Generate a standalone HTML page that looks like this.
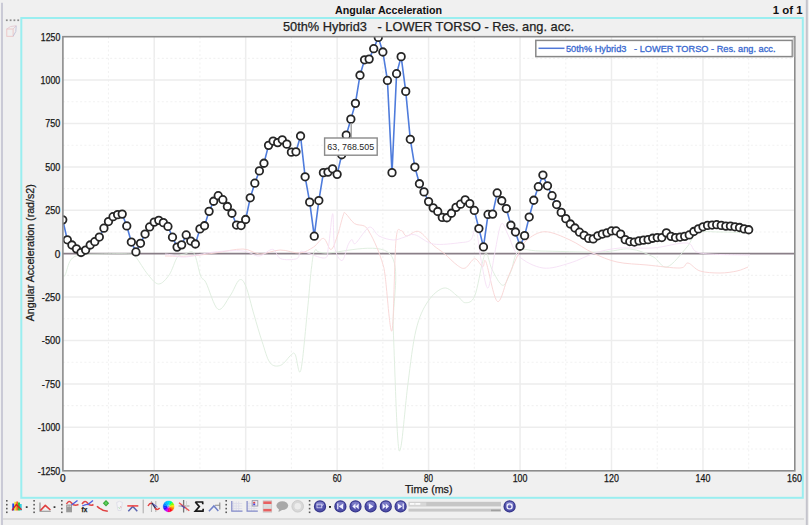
<!DOCTYPE html>
<html><head><meta charset="utf-8">
<style>
html,body{margin:0;padding:0;background:#f0f0f0;}
body{width:809px;height:525px;overflow:hidden;position:relative;font-family:"Liberation Sans",sans-serif;}
svg{position:absolute;left:0;top:0;}
.gm{stroke:#ededed;stroke-width:1.5;}
.gn{stroke:#f2f2f2;stroke-width:1.1;stroke-dasharray:2 2.3;}
.lab{font-family:"Liberation Sans",sans-serif;font-size:10.2px;fill:#161616;stroke:#161616;stroke-width:0.25;}
</style></head><body>
<svg width="809" height="525" viewBox="0 0 809 525">
 <rect x="0" y="0" width="809" height="525" fill="#f0f0f0"/>
 <!-- window lines -->
 <line x1="2" y1="2.7" x2="2" y2="525" stroke="#cacad6" stroke-width="2"/>
 <line x1="806.8" y1="0" x2="806.8" y2="525" stroke="#c4c4cc" stroke-width="2"/>
 <line x1="3" y1="519" x2="804" y2="519" stroke="#d6d6d6" stroke-width="1.7"/>
 <!-- cyan frame -->
 <rect x="21.3" y="18" width="781.5" height="479.8" fill="none" stroke="#9aeef0" stroke-width="2"/>
 <!-- title -->
 <text x="388.5" y="14" text-anchor="middle" font-family="Liberation Sans" font-weight="bold" font-size="11.2px" fill="#111" textLength="107" lengthAdjust="spacingAndGlyphs">Angular Acceleration</text>
 <text x="802.5" y="14.2" text-anchor="end" font-family="Liberation Sans" font-weight="bold" font-size="11.4px" fill="#111">1 of 1</text>
 <text x="428.5" y="30.6" text-anchor="middle" font-family="Liberation Sans" font-size="12.8px" fill="#222" stroke="#222" stroke-width="0.25">50th% Hybrid3 &#160; - LOWER TORSO - Res. ang. acc.</text>
 <!-- dots left -->
 <g fill="#8c8c8c"><rect x="5.9" y="19.4" width="1.8" height="1.7"/><rect x="9.7" y="19.4" width="1.8" height="1.7"/><rect x="13.5" y="19.4" width="1.8" height="1.7"/><rect x="17.3" y="19.4" width="1.8" height="1.7"/></g>
 <g fill="none" stroke-width="0.9"><rect x="6.8" y="29" width="6.3" height="7.3" stroke="#ecc4c4"/><path d="M6.8 29 L10.5 26.5 L16.2 25.8 L13.1 29" stroke="#e4c8d0"/><path d="M16.2 25.8 L15.8 31.5 L13.1 36.3" stroke="#c0c0d8"/></g>
 <!-- plot -->
 <rect x="62.9" y="36.7" width="731.90" height="434.10" fill="#ffffff"/>
 <g><line x1="108.48" y1="36.7" x2="108.48" y2="470.8" class="gn"/><line x1="154.21" y1="36.7" x2="154.21" y2="470.8" class="gm"/><line x1="199.94" y1="36.7" x2="199.94" y2="470.8" class="gn"/><line x1="245.67" y1="36.7" x2="245.67" y2="470.8" class="gm"/><line x1="291.40" y1="36.7" x2="291.40" y2="470.8" class="gn"/><line x1="337.13" y1="36.7" x2="337.13" y2="470.8" class="gm"/><line x1="382.86" y1="36.7" x2="382.86" y2="470.8" class="gn"/><line x1="428.59" y1="36.7" x2="428.59" y2="470.8" class="gm"/><line x1="474.32" y1="36.7" x2="474.32" y2="470.8" class="gn"/><line x1="520.05" y1="36.7" x2="520.05" y2="470.8" class="gm"/><line x1="565.78" y1="36.7" x2="565.78" y2="470.8" class="gn"/><line x1="611.51" y1="36.7" x2="611.51" y2="470.8" class="gm"/><line x1="657.24" y1="36.7" x2="657.24" y2="470.8" class="gn"/><line x1="702.97" y1="36.7" x2="702.97" y2="470.8" class="gm"/><line x1="748.70" y1="36.7" x2="748.70" y2="470.8" class="gn"/><line x1="62.9" y1="449.00" x2="794.8" y2="449.00" class="gn"/><line x1="62.9" y1="427.30" x2="794.8" y2="427.30" class="gm"/><line x1="62.9" y1="405.60" x2="794.8" y2="405.60" class="gn"/><line x1="62.9" y1="383.90" x2="794.8" y2="383.90" class="gm"/><line x1="62.9" y1="362.20" x2="794.8" y2="362.20" class="gn"/><line x1="62.9" y1="340.50" x2="794.8" y2="340.50" class="gm"/><line x1="62.9" y1="318.80" x2="794.8" y2="318.80" class="gn"/><line x1="62.9" y1="297.10" x2="794.8" y2="297.10" class="gm"/><line x1="62.9" y1="275.40" x2="794.8" y2="275.40" class="gn"/><line x1="62.9" y1="232.00" x2="794.8" y2="232.00" class="gn"/><line x1="62.9" y1="210.30" x2="794.8" y2="210.30" class="gm"/><line x1="62.9" y1="188.60" x2="794.8" y2="188.60" class="gn"/><line x1="62.9" y1="166.90" x2="794.8" y2="166.90" class="gm"/><line x1="62.9" y1="145.20" x2="794.8" y2="145.20" class="gn"/><line x1="62.9" y1="123.50" x2="794.8" y2="123.50" class="gm"/><line x1="62.9" y1="101.80" x2="794.8" y2="101.80" class="gn"/><line x1="62.9" y1="80.10" x2="794.8" y2="80.10" class="gm"/><line x1="62.9" y1="58.40" x2="794.8" y2="58.40" class="gn"/></g>
 <line x1="62.9" y1="253.7" x2="794.8" y2="253.7" stroke="#8a7f88" stroke-width="1.8"/>
 <g fill="none" stroke-width="0.9" stroke-linejoin="round">
  <path d="M63.5,276.0 C63.8,275.8 64.1,277.4 65.3,274.7 C66.5,272.0 68.2,263.3 70.7,260.0 C73.2,256.7 75.1,256.0 80.0,255.0 C84.9,254.0 91.7,254.2 100.0,254.0 C108.3,253.8 124.0,253.4 130.0,254.0 C136.0,254.6 133.0,253.9 136.0,257.3 C139.0,260.8 144.2,270.2 148.0,274.7 C151.8,279.1 155.1,284.0 158.7,284.0 C162.2,284.0 166.2,279.1 169.3,274.7 C172.4,270.2 174.7,260.8 177.3,257.3 C179.9,253.9 182.2,254.7 185.0,254.0 C187.8,253.3 191.4,249.6 194.0,253.3 C196.6,257.0 198.7,271.1 200.7,276.0 C202.7,280.9 203.1,277.1 206.0,282.7 C208.9,288.2 214.0,307.1 218.0,309.3 C222.0,311.5 226.4,300.9 230.0,296.0 C233.6,291.1 236.6,281.6 239.3,280.0 C242.0,278.4 243.6,280.9 246.0,286.7 C248.4,292.5 251.3,305.6 254.0,314.7 C256.7,323.8 259.3,333.3 262.0,341.3 C264.7,349.3 266.9,358.7 270.0,362.7 C273.1,366.7 277.1,366.6 280.7,365.3 C284.2,364.0 288.9,356.5 291.3,354.7 C293.7,352.9 293.7,352.0 295.3,354.7 C296.9,357.4 298.7,377.8 300.7,370.7 C302.7,363.6 305.5,328.9 307.3,312.0 C309.1,295.1 310.0,279.6 311.3,269.3 C312.6,259.0 313.0,252.7 315.3,250.0 C317.6,247.3 312.6,252.3 325.0,253.0 C337.4,253.7 378.6,241.2 390.0,254.0 C401.4,266.8 392.1,300.4 393.3,330.0 C394.5,359.6 396.1,411.8 397.3,431.3 C398.6,450.9 399.0,455.3 400.8,447.3 C402.6,439.3 405.5,402.9 408.0,383.3 C410.5,363.8 412.7,343.7 416.0,330.0 C419.3,316.3 423.3,308.3 428.0,301.3 C432.7,294.3 439.1,288.9 444.0,288.0 C448.9,287.1 453.8,293.6 457.3,296.0 C460.9,298.4 462.4,302.7 465.3,302.7 C468.2,302.7 471.8,302.9 474.7,296.0 C477.6,289.1 480.7,268.4 482.7,261.3 C484.7,254.2 485.1,252.0 486.7,253.3 C488.2,254.6 489.3,264.0 492.0,269.3 C494.7,274.6 499.6,284.9 502.7,285.3 C505.8,285.8 508.0,277.8 510.7,272.0 C513.4,266.2 513.8,254.2 518.7,250.7 C523.6,247.2 526.5,250.8 540.0,251.0 C553.5,251.2 585.0,252.3 600.0,252.0 C615.0,251.7 621.2,248.2 630.0,249.0 C638.8,249.8 646.8,253.7 653.0,256.7 C659.2,259.7 661.3,268.6 667.0,267.0 C672.7,265.4 682.0,252.7 687.0,247.0 C692.0,241.3 691.5,235.5 697.0,233.0 C702.5,230.5 711.2,232.0 720.0,232.0 C728.8,232.0 745.0,232.8 750.0,233.0" stroke="#dcecdc"/>
  <path d="M165.0,256.0 C169.2,256.0 181.7,256.5 190.0,256.0 C198.3,255.5 206.2,254.2 215.0,253.0 C223.8,251.8 235.5,248.8 243.0,249.0 C250.5,249.2 253.8,253.8 260.0,254.0 C266.2,254.2 273.3,250.2 280.0,250.0 C286.7,249.8 294.4,253.5 300.0,253.0 C305.6,252.5 309.7,249.4 313.6,247.0 C317.5,244.6 320.6,238.0 323.5,238.4 C326.4,238.8 328.6,249.7 330.9,249.5 C333.1,249.3 334.9,242.8 337.0,237.0 C339.1,231.2 341.9,218.8 343.3,214.9 C344.8,211.0 343.9,212.2 345.7,213.6 C347.5,215.0 351.3,221.4 354.4,223.5 C357.5,225.6 361.8,224.6 364.3,226.0 C366.8,227.4 367.2,228.5 369.3,232.0 C371.4,235.5 374.4,241.6 376.7,247.0 C379.0,252.4 381.5,259.3 382.9,264.4 C384.3,269.4 383.8,266.2 385.3,277.3 C386.8,288.4 390.2,336.9 392.0,330.7 C393.8,324.5 394.4,256.7 396.0,240.0 C397.6,223.3 399.5,231.4 401.3,230.7 C403.1,230.0 403.8,235.9 406.7,236.0 C409.6,236.1 414.3,229.9 418.7,231.5 C423.1,233.1 429.1,241.7 433.3,245.3 C437.5,248.9 440.0,250.0 444.0,253.3 C448.0,256.6 453.8,262.9 457.3,265.3 C460.9,267.8 462.4,269.1 465.3,268.0 C468.2,266.9 471.8,258.9 474.7,258.7 C477.6,258.5 480.8,266.1 482.7,266.7 C484.6,267.2 483.6,256.2 486.0,262.0 C488.4,267.8 493.6,298.8 497.3,301.3 C501.0,303.9 504.4,285.3 508.0,277.3 C511.6,269.3 515.5,259.5 518.7,253.3 C521.9,247.1 522.6,243.6 527.0,240.0 C531.4,236.4 537.8,231.7 545.0,231.7 C552.2,231.7 562.0,236.4 570.0,240.0 C578.0,243.6 585.2,249.3 593.0,253.0 C600.8,256.7 608.0,260.0 617.0,262.0 C626.0,264.0 636.5,264.0 647.0,265.0 C657.5,266.0 673.2,268.3 680.0,268.0 C686.8,267.7 684.7,262.5 688.0,263.0 C691.3,263.5 694.7,269.3 700.0,271.0 C705.3,272.7 713.8,273.0 720.0,273.0 C726.2,273.0 732.3,272.0 737.0,271.0 C741.7,270.0 746.2,267.7 748.0,267.0" stroke="#f8d4d4"/>
  <path d="M165.0,254.0 C165.9,254.1 167.4,254.2 170.7,254.7 C174.0,255.2 177.8,257.4 185.0,257.0 C192.2,256.6 204.3,253.0 214.0,252.0 C223.7,251.0 235.5,250.3 243.0,251.0 C250.5,251.7 254.1,256.3 259.0,256.0 C263.9,255.7 269.1,248.9 272.7,249.3 C276.3,249.8 276.7,257.1 280.7,258.7 C284.7,260.3 293.5,259.8 296.7,258.7 C299.9,257.6 298.7,253.1 300.0,252.0 C301.3,250.9 300.6,251.0 304.7,252.0 C308.8,253.0 320.8,258.8 324.7,258.0 C328.6,257.2 327.1,254.4 328.4,247.0 C329.7,239.6 331.7,213.6 332.7,213.6 C333.7,213.6 333.1,239.2 334.6,247.0 C336.2,254.8 339.7,261.0 342.0,260.6 C344.3,260.2 346.5,248.1 348.2,244.6 C349.9,241.1 350.8,239.8 352.0,239.6 C353.2,239.4 352.7,245.4 355.6,243.3 C358.5,241.2 365.4,228.4 369.3,227.2 C373.2,226.0 375.0,233.9 379.0,236.0 C383.0,238.1 389.1,239.8 393.3,240.0 C397.5,240.2 400.4,238.2 404.0,237.3 C407.6,236.4 409.8,233.6 414.7,234.7 C419.6,235.8 425.8,242.7 433.3,244.0 C440.9,245.3 453.8,243.4 460.0,242.7 C466.2,242.0 468.0,242.2 470.7,240.0 C473.4,237.8 474.2,225.8 476.0,229.3 C477.8,232.9 479.3,251.5 481.3,261.3 C483.3,271.1 485.8,289.3 488.0,288.0 C490.2,286.7 492.5,264.0 494.7,253.3 C496.9,242.6 499.1,227.1 501.3,224.0 C503.5,220.9 505.1,229.4 508.0,234.7 C510.9,240.0 512.9,250.4 518.7,256.0 C524.5,261.6 534.5,266.8 543.0,268.0 C551.5,269.2 561.3,265.5 570.0,263.0 C578.7,260.5 586.7,255.5 595.0,253.0 C603.3,250.5 610.3,248.8 620.0,248.0 C629.7,247.2 641.8,248.8 653.0,248.0 C664.2,247.2 679.2,242.2 687.0,243.0 C694.8,243.8 689.5,251.0 700.0,253.0 C710.5,255.0 741.7,254.7 750.0,255.0" stroke="#f5e0f5"/>
 </g>
 <clipPath id="pc"><rect x="62.9" y="36.7" width="731.90" height="434.10"/></clipPath>
 <g clip-path="url(#pc)">
  <polyline points="62.75,219.85 67.32,239.81 71.90,245.02 76.47,248.84 81.04,252.48 85.62,250.05 90.19,245.02 94.76,241.72 99.33,237.03 103.91,228.18 108.48,221.58 113.05,216.72 117.63,214.64 122.20,214.12 126.77,225.92 131.34,242.07 135.92,251.96 140.49,243.28 145.06,234.08 149.64,226.97 154.21,222.10 158.78,220.37 163.36,222.63 167.93,226.44 172.50,237.21 177.08,247.10 181.65,244.85 186.22,234.95 190.79,241.03 195.37,243.98 199.94,228.88 204.51,225.75 209.09,211.34 213.66,201.27 218.23,195.72 222.81,199.71 227.38,206.48 231.95,213.25 236.52,225.06 241.10,225.58 245.67,219.50 250.24,197.80 254.82,183.22 259.39,170.89 263.96,163.25 268.54,145.37 273.11,141.03 277.68,142.60 282.25,139.82 286.83,144.16 291.40,152.14 295.97,151.80 300.55,136.00 305.12,176.80 309.69,202.14 314.26,236.17 318.84,200.58 323.41,172.63 327.98,172.11 332.56,168.81 337.13,174.36 341.70,154.75 346.28,135.13 350.85,119.16 355.42,103.36 360.00,75.24 364.57,59.79 369.14,59.09 373.71,48.68 378.29,37.39 382.86,51.98 387.43,80.45 392.01,172.63 396.58,73.68 401.15,56.66 405.73,91.38 410.30,139.30 414.87,167.07 419.44,183.74 424.02,191.90 428.59,201.62 433.16,207.87 437.74,211.52 442.31,217.42 446.88,217.76 451.46,213.25 456.03,207.35 460.60,204.22 465.17,199.88 469.75,203.53 474.32,210.47 478.89,228.53 483.47,246.93 488.04,214.47 492.61,214.12 497.19,192.94 501.76,200.75 506.33,208.56 510.90,225.23 515.48,232.00 520.05,246.24 524.62,235.65 529.20,217.07 533.77,200.23 538.34,186.69 542.91,175.06 547.49,185.82 552.06,195.72 556.63,204.57 561.21,212.38 565.78,218.63 570.35,224.01 574.93,228.01 579.50,232.17 584.07,235.30 588.65,238.42 593.22,238.94 597.79,235.82 602.36,234.08 606.94,232.87 611.51,230.96 616.08,230.96 620.66,234.08 625.23,239.64 629.80,241.55 634.38,242.07 638.95,240.85 643.52,240.16 648.09,239.64 652.67,238.25 657.24,237.56 661.81,237.56 666.39,232.87 670.96,236.34 675.53,237.56 680.11,237.03 684.68,236.34 689.25,234.95 693.82,231.48 698.40,228.88 702.97,226.79 707.54,225.40 712.12,225.06 716.69,224.71 721.26,225.40 725.84,226.10 730.41,226.10 734.98,226.79 739.55,227.49 744.13,228.88 748.70,229.74" fill="none" stroke="#4f7cdc" stroke-width="1.6" stroke-linejoin="round"/>
  <g fill="#ffffff" stroke="#262626" stroke-width="1.8"><circle cx="62.75" cy="219.85" r="3.75"/><circle cx="67.32" cy="239.81" r="3.75"/><circle cx="71.90" cy="245.02" r="3.75"/><circle cx="76.47" cy="248.84" r="3.75"/><circle cx="81.04" cy="252.48" r="3.75"/><circle cx="85.62" cy="250.05" r="3.75"/><circle cx="90.19" cy="245.02" r="3.75"/><circle cx="94.76" cy="241.72" r="3.75"/><circle cx="99.33" cy="237.03" r="3.75"/><circle cx="103.91" cy="228.18" r="3.75"/><circle cx="108.48" cy="221.58" r="3.75"/><circle cx="113.05" cy="216.72" r="3.75"/><circle cx="117.63" cy="214.64" r="3.75"/><circle cx="122.20" cy="214.12" r="3.75"/><circle cx="126.77" cy="225.92" r="3.75"/><circle cx="131.34" cy="242.07" r="3.75"/><circle cx="135.92" cy="251.96" r="3.75"/><circle cx="140.49" cy="243.28" r="3.75"/><circle cx="145.06" cy="234.08" r="3.75"/><circle cx="149.64" cy="226.97" r="3.75"/><circle cx="154.21" cy="222.10" r="3.75"/><circle cx="158.78" cy="220.37" r="3.75"/><circle cx="163.36" cy="222.63" r="3.75"/><circle cx="167.93" cy="226.44" r="3.75"/><circle cx="172.50" cy="237.21" r="3.75"/><circle cx="177.08" cy="247.10" r="3.75"/><circle cx="181.65" cy="244.85" r="3.75"/><circle cx="186.22" cy="234.95" r="3.75"/><circle cx="190.79" cy="241.03" r="3.75"/><circle cx="195.37" cy="243.98" r="3.75"/><circle cx="199.94" cy="228.88" r="3.75"/><circle cx="204.51" cy="225.75" r="3.75"/><circle cx="209.09" cy="211.34" r="3.75"/><circle cx="213.66" cy="201.27" r="3.75"/><circle cx="218.23" cy="195.72" r="3.75"/><circle cx="222.81" cy="199.71" r="3.75"/><circle cx="227.38" cy="206.48" r="3.75"/><circle cx="231.95" cy="213.25" r="3.75"/><circle cx="236.52" cy="225.06" r="3.75"/><circle cx="241.10" cy="225.58" r="3.75"/><circle cx="245.67" cy="219.50" r="3.75"/><circle cx="250.24" cy="197.80" r="3.75"/><circle cx="254.82" cy="183.22" r="3.75"/><circle cx="259.39" cy="170.89" r="3.75"/><circle cx="263.96" cy="163.25" r="3.75"/><circle cx="268.54" cy="145.37" r="3.75"/><circle cx="273.11" cy="141.03" r="3.75"/><circle cx="277.68" cy="142.60" r="3.75"/><circle cx="282.25" cy="139.82" r="3.75"/><circle cx="286.83" cy="144.16" r="3.75"/><circle cx="291.40" cy="152.14" r="3.75"/><circle cx="295.97" cy="151.80" r="3.75"/><circle cx="300.55" cy="136.00" r="3.75"/><circle cx="305.12" cy="176.80" r="3.75"/><circle cx="309.69" cy="202.14" r="3.75"/><circle cx="314.26" cy="236.17" r="3.75"/><circle cx="318.84" cy="200.58" r="3.75"/><circle cx="323.41" cy="172.63" r="3.75"/><circle cx="327.98" cy="172.11" r="3.75"/><circle cx="332.56" cy="168.81" r="3.75"/><circle cx="337.13" cy="174.36" r="3.75"/><circle cx="341.70" cy="154.75" r="3.75"/><circle cx="346.28" cy="135.13" r="3.75"/><circle cx="350.85" cy="119.16" r="3.75"/><circle cx="355.42" cy="103.36" r="3.75"/><circle cx="360.00" cy="75.24" r="3.75"/><circle cx="364.57" cy="59.79" r="3.75"/><circle cx="369.14" cy="59.09" r="3.75"/><circle cx="373.71" cy="48.68" r="3.75"/><circle cx="378.29" cy="37.39" r="3.75"/><circle cx="382.86" cy="51.98" r="3.75"/><circle cx="387.43" cy="80.45" r="3.75"/><circle cx="392.01" cy="172.63" r="3.75"/><circle cx="396.58" cy="73.68" r="3.75"/><circle cx="401.15" cy="56.66" r="3.75"/><circle cx="405.73" cy="91.38" r="3.75"/><circle cx="410.30" cy="139.30" r="3.75"/><circle cx="414.87" cy="167.07" r="3.75"/><circle cx="419.44" cy="183.74" r="3.75"/><circle cx="424.02" cy="191.90" r="3.75"/><circle cx="428.59" cy="201.62" r="3.75"/><circle cx="433.16" cy="207.87" r="3.75"/><circle cx="437.74" cy="211.52" r="3.75"/><circle cx="442.31" cy="217.42" r="3.75"/><circle cx="446.88" cy="217.76" r="3.75"/><circle cx="451.46" cy="213.25" r="3.75"/><circle cx="456.03" cy="207.35" r="3.75"/><circle cx="460.60" cy="204.22" r="3.75"/><circle cx="465.17" cy="199.88" r="3.75"/><circle cx="469.75" cy="203.53" r="3.75"/><circle cx="474.32" cy="210.47" r="3.75"/><circle cx="478.89" cy="228.53" r="3.75"/><circle cx="483.47" cy="246.93" r="3.75"/><circle cx="488.04" cy="214.47" r="3.75"/><circle cx="492.61" cy="214.12" r="3.75"/><circle cx="497.19" cy="192.94" r="3.75"/><circle cx="501.76" cy="200.75" r="3.75"/><circle cx="506.33" cy="208.56" r="3.75"/><circle cx="510.90" cy="225.23" r="3.75"/><circle cx="515.48" cy="232.00" r="3.75"/><circle cx="520.05" cy="246.24" r="3.75"/><circle cx="524.62" cy="235.65" r="3.75"/><circle cx="529.20" cy="217.07" r="3.75"/><circle cx="533.77" cy="200.23" r="3.75"/><circle cx="538.34" cy="186.69" r="3.75"/><circle cx="542.91" cy="175.06" r="3.75"/><circle cx="547.49" cy="185.82" r="3.75"/><circle cx="552.06" cy="195.72" r="3.75"/><circle cx="556.63" cy="204.57" r="3.75"/><circle cx="561.21" cy="212.38" r="3.75"/><circle cx="565.78" cy="218.63" r="3.75"/><circle cx="570.35" cy="224.01" r="3.75"/><circle cx="574.93" cy="228.01" r="3.75"/><circle cx="579.50" cy="232.17" r="3.75"/><circle cx="584.07" cy="235.30" r="3.75"/><circle cx="588.65" cy="238.42" r="3.75"/><circle cx="593.22" cy="238.94" r="3.75"/><circle cx="597.79" cy="235.82" r="3.75"/><circle cx="602.36" cy="234.08" r="3.75"/><circle cx="606.94" cy="232.87" r="3.75"/><circle cx="611.51" cy="230.96" r="3.75"/><circle cx="616.08" cy="230.96" r="3.75"/><circle cx="620.66" cy="234.08" r="3.75"/><circle cx="625.23" cy="239.64" r="3.75"/><circle cx="629.80" cy="241.55" r="3.75"/><circle cx="634.38" cy="242.07" r="3.75"/><circle cx="638.95" cy="240.85" r="3.75"/><circle cx="643.52" cy="240.16" r="3.75"/><circle cx="648.09" cy="239.64" r="3.75"/><circle cx="652.67" cy="238.25" r="3.75"/><circle cx="657.24" cy="237.56" r="3.75"/><circle cx="661.81" cy="237.56" r="3.75"/><circle cx="666.39" cy="232.87" r="3.75"/><circle cx="670.96" cy="236.34" r="3.75"/><circle cx="675.53" cy="237.56" r="3.75"/><circle cx="680.11" cy="237.03" r="3.75"/><circle cx="684.68" cy="236.34" r="3.75"/><circle cx="689.25" cy="234.95" r="3.75"/><circle cx="693.82" cy="231.48" r="3.75"/><circle cx="698.40" cy="228.88" r="3.75"/><circle cx="702.97" cy="226.79" r="3.75"/><circle cx="707.54" cy="225.40" r="3.75"/><circle cx="712.12" cy="225.06" r="3.75"/><circle cx="716.69" cy="224.71" r="3.75"/><circle cx="721.26" cy="225.40" r="3.75"/><circle cx="725.84" cy="226.10" r="3.75"/><circle cx="730.41" cy="226.10" r="3.75"/><circle cx="734.98" cy="226.79" r="3.75"/><circle cx="739.55" cy="227.49" r="3.75"/><circle cx="744.13" cy="228.88" r="3.75"/><circle cx="748.70" cy="229.74" r="3.75"/></g>
 </g>
 <rect x="62.9" y="36.7" width="731.90" height="434.10" fill="none" stroke="#8c8c8c" stroke-width="1.6"/>
 <!-- legend -->
 <rect x="535.8" y="40.4" width="256.5" height="16.2" fill="#ffffff" stroke="#888888" stroke-width="1.5"/>
 <line x1="793.5" y1="38" x2="793.5" y2="57" stroke="#d0d0d0" stroke-width="1.5"/>
 <line x1="538.5" y1="48.3" x2="564.5" y2="48.3" stroke="#5078d8" stroke-width="1.5"/>
 <text x="566" y="51.6" font-family="Liberation Sans" font-size="8.6px" fill="#3a6ad0" stroke="#3a6ad0" stroke-width="0.3" textLength="209.5" lengthAdjust="spacingAndGlyphs">50th% Hybrid3 &#160; - LOWER TORSO - Res. ang. acc.</text>
 <!-- tooltip -->
 <line x1="351.2" y1="123" x2="351.2" y2="138" stroke="#999" stroke-width="1.3"/>
 <rect x="324.6" y="138" width="52.6" height="17.2" fill="#ffffff" stroke="#8a8a8a" stroke-width="1.4"/>
 <text x="350.7" y="150.4" text-anchor="middle" font-family="Liberation Sans" font-size="9.8px" fill="#1e1e1e" textLength="46.8" lengthAdjust="spacingAndGlyphs">63, 768.505</text>
 <!-- axis labels -->
 <g class="lab"><text x="60.3" y="40.60" text-anchor="end" textLength="19.5" lengthAdjust="spacingAndGlyphs">1250</text><text x="60.3" y="84.00" text-anchor="end" textLength="19.7" lengthAdjust="spacingAndGlyphs">1000</text><text x="60.3" y="127.40" text-anchor="end" textLength="15.0" lengthAdjust="spacingAndGlyphs">750</text><text x="60.3" y="170.80" text-anchor="end" textLength="15.0" lengthAdjust="spacingAndGlyphs">500</text><text x="60.3" y="214.20" text-anchor="end" textLength="15.0" lengthAdjust="spacingAndGlyphs">250</text><text x="60.3" y="257.60" text-anchor="end" textLength="5.6" lengthAdjust="spacingAndGlyphs">0</text><text x="60.3" y="301.00" text-anchor="end" textLength="18.5" lengthAdjust="spacingAndGlyphs">-250</text><text x="60.3" y="344.40" text-anchor="end" textLength="18.5" lengthAdjust="spacingAndGlyphs">-500</text><text x="60.3" y="387.80" text-anchor="end" textLength="18.5" lengthAdjust="spacingAndGlyphs">-750</text><text x="60.3" y="431.20" text-anchor="end" textLength="22.6" lengthAdjust="spacingAndGlyphs">-1000</text><text x="60.3" y="474.60" text-anchor="end" textLength="22.6" lengthAdjust="spacingAndGlyphs">-1250</text><text x="62.75" y="481.6" text-anchor="middle" textLength="5.6" lengthAdjust="spacingAndGlyphs">0</text><text x="154.21" y="481.6" text-anchor="middle" textLength="9.0" lengthAdjust="spacingAndGlyphs">20</text><text x="245.67" y="481.6" text-anchor="middle" textLength="9.0" lengthAdjust="spacingAndGlyphs">40</text><text x="337.13" y="481.6" text-anchor="middle" textLength="9.0" lengthAdjust="spacingAndGlyphs">60</text><text x="428.59" y="481.6" text-anchor="middle" textLength="9.0" lengthAdjust="spacingAndGlyphs">80</text><text x="520.05" y="481.6" text-anchor="middle" textLength="14.8" lengthAdjust="spacingAndGlyphs">100</text><text x="611.51" y="481.6" text-anchor="middle" textLength="14.8" lengthAdjust="spacingAndGlyphs">120</text><text x="702.97" y="481.6" text-anchor="middle" textLength="14.8" lengthAdjust="spacingAndGlyphs">140</text><text x="794.43" y="481.6" text-anchor="middle" textLength="14.8" lengthAdjust="spacingAndGlyphs">160</text></g>
 <text transform="translate(33.8,252.8) rotate(-90)" text-anchor="middle" font-family="Liberation Sans" font-size="11px" fill="#1a1a1a" stroke="#1a1a1a" stroke-width="0.25" textLength="137" lengthAdjust="spacingAndGlyphs">Angular Acceleration (rad/s2)</text>
 <text x="428.7" y="492.5" text-anchor="middle" font-family="Liberation Sans" font-size="11px" fill="#1a1a1a" stroke="#1a1a1a" stroke-width="0.25" textLength="47.5" lengthAdjust="spacingAndGlyphs">Time (ms)</text>
 <!-- toolbar -->
 <rect x="6.0" y="500.0" width="1.6" height="1.6" fill="#5a5a5a"/><rect x="6.0" y="503.9" width="1.6" height="1.6" fill="#5a5a5a"/><rect x="6.0" y="507.8" width="1.6" height="1.6" fill="#5a5a5a"/><rect x="6.0" y="511.49999999999994" width="1.6" height="1.6" fill="#5a5a5a"/><rect x="33.300000000000004" y="500.0" width="1.6" height="1.6" fill="#5a5a5a"/><rect x="33.300000000000004" y="503.9" width="1.6" height="1.6" fill="#5a5a5a"/><rect x="33.300000000000004" y="507.8" width="1.6" height="1.6" fill="#5a5a5a"/><rect x="33.300000000000004" y="511.49999999999994" width="1.6" height="1.6" fill="#5a5a5a"/><rect x="61.0" y="500.0" width="1.6" height="1.6" fill="#5a5a5a"/><rect x="61.0" y="503.9" width="1.6" height="1.6" fill="#5a5a5a"/><rect x="61.0" y="507.8" width="1.6" height="1.6" fill="#5a5a5a"/><rect x="61.0" y="511.49999999999994" width="1.6" height="1.6" fill="#5a5a5a"/><rect x="225.39999999999998" y="500.0" width="1.6" height="1.6" fill="#5a5a5a"/><rect x="225.39999999999998" y="503.9" width="1.6" height="1.6" fill="#5a5a5a"/><rect x="225.39999999999998" y="507.8" width="1.6" height="1.6" fill="#5a5a5a"/><rect x="225.39999999999998" y="511.49999999999994" width="1.6" height="1.6" fill="#5a5a5a"/><rect x="308.8" y="500.0" width="1.6" height="1.6" fill="#5a5a5a"/><rect x="308.8" y="503.9" width="1.6" height="1.6" fill="#5a5a5a"/><rect x="308.8" y="507.8" width="1.6" height="1.6" fill="#5a5a5a"/><rect x="308.8" y="511.49999999999994" width="1.6" height="1.6" fill="#5a5a5a"/><g><rect x="12.3" y="503.5" width="2" height="7" fill="#2040e0"/><rect x="14.4" y="501.8" width="2" height="8.8" fill="#f0e020"/><rect x="16.3" y="501.5" width="1.8" height="9" fill="#f06020"/><rect x="18" y="502.5" width="2" height="8" fill="#30c030"/><rect x="19.8" y="504" width="1.9" height="6.5" fill="#30d0e0"/><path d="M12 510.3 L16.3 504.6 L21.6 509.8" stroke="#d82020" stroke-width="1.3" fill="none"/></g><rect x="25.8" y="506.3" width="1.8" height="1.6" fill="#222"/><rect x="53.6" y="506.3" width="1.8" height="1.6" fill="#222"/><path d="M40 502.5 V511.2 H50.8" stroke="#8a8a8a" stroke-width="1.1" fill="none"/><path d="M40.3 510.6 L45.3 505.4 L50.4 510" stroke="#e04040" stroke-width="1.6" fill="none" stroke-linejoin="round"/><rect x="66.2" y="504.5" width="5.8" height="7.8" fill="#9a9a9a"/><rect x="67.3" y="505.6" width="1.4" height="1.2" fill="#ddd"/><rect x="69.5" y="505.6" width="1.4" height="1.2" fill="#ddd"/><path d="M66.5 504 Q69 499.5 71.5 503 T78.5 504.5" stroke="#e04848" stroke-width="1.5" fill="none"/><path d="M71.5 505 L77.5 500.5" stroke="#5060e0" stroke-width="1.4" fill="none"/><path d="M82 504 Q85 499.5 87.5 503 T93.5 504.5" stroke="#e04848" stroke-width="1.5" fill="none"/><path d="M82.3 506 Q86 504 88 504.5 L93 500.5" stroke="#5060e0" stroke-width="1.4" fill="none"/><text x="81.6" y="512.4" font-family="Liberation Sans" font-weight="bold" font-size="6.4px" fill="#1a1a1a" stroke="#1a1a1a" stroke-width="0.25">fx</text><path d="M97 506.2 Q101 510.5 107.8 511.3" stroke="#e04040" stroke-width="1.5" fill="none"/><path d="M106 500 L109.2 503.3 L106 506.6 L102.8 503.3 Z" fill="#38a838"/><path d="M106 501.5 L107.7 503.3 L106 505 L104.3 503.3 Z" fill="#60d060"/><path d="M116.6 502.5 L119.5 501.3 L122.4 502.5 L121 510.5 L118 510.5 Z" fill="#f4f4f6" stroke="#dadae6" stroke-width="0.8"/><path d="M118.5 507 L120 509" stroke="#b0d8b0" stroke-width="0.8"/><path d="M120.5 506 L121 508" stroke="#e0b0b0" stroke-width="0.8"/><path d="M128.3 511.3 L132.8 506.4 L137.3 511.3" stroke="#5a64b0" stroke-width="1.5" fill="none"/><path d="M127.3 505.9 H138.3" stroke="#ee4a4a" stroke-width="1.6"/><line x1="143.2" y1="499.6" x2="143.2" y2="513.3" stroke="#a8a8a8" stroke-width="1"/><path d="M151.5 501 V512 M155.8 501 V512" stroke="#b4b4b4" stroke-width="1.1"/><path d="M148 506 Q150 502.5 152 503.5" stroke="#e04040" stroke-width="1.5" fill="none"/><path d="M152 503 L156 509" stroke="#303060" stroke-width="1.4" fill="none"/><path d="M155 508 Q157 511 159.6 508" stroke="#e04040" stroke-width="1.5" fill="none"/><path d="M153.5 504 L157.5 507" stroke="#6060d0" stroke-width="1" fill="none"/><g transform="translate(168.7,506.4)"><path d="M0 0 L-1.42 -5.31 A5.5 5.5 0 0 1 1.42 -5.31 Z" fill="#00d8ff" stroke="#00d8ff" stroke-width="0.3"/><path d="M0 0 L1.42 -5.31 A5.5 5.5 0 0 1 3.89 -3.89 Z" fill="#00ff90" stroke="#00ff90" stroke-width="0.3"/><path d="M0 0 L3.89 -3.89 A5.5 5.5 0 0 1 5.31 -1.42 Z" fill="#80ff00" stroke="#80ff00" stroke-width="0.3"/><path d="M0 0 L5.31 -1.42 A5.5 5.5 0 0 1 5.31 1.42 Z" fill="#ffe000" stroke="#ffe000" stroke-width="0.3"/><path d="M0 0 L5.31 1.42 A5.5 5.5 0 0 1 3.89 3.89 Z" fill="#ff8000" stroke="#ff8000" stroke-width="0.3"/><path d="M0 0 L3.89 3.89 A5.5 5.5 0 0 1 1.42 5.31 Z" fill="#ff1010" stroke="#ff1010" stroke-width="0.3"/><path d="M0 0 L1.42 5.31 A5.5 5.5 0 0 1 -1.42 5.31 Z" fill="#ff0080" stroke="#ff0080" stroke-width="0.3"/><path d="M0 0 L-1.42 5.31 A5.5 5.5 0 0 1 -3.89 3.89 Z" fill="#c000ff" stroke="#c000ff" stroke-width="0.3"/><path d="M0 0 L-3.89 3.89 A5.5 5.5 0 0 1 -5.31 1.42 Z" fill="#4000ff" stroke="#4000ff" stroke-width="0.3"/><path d="M0 0 L-5.31 1.42 A5.5 5.5 0 0 1 -5.31 -1.42 Z" fill="#0040ff" stroke="#0040ff" stroke-width="0.3"/><path d="M0 0 L-5.31 -1.42 A5.5 5.5 0 0 1 -3.89 -3.89 Z" fill="#0090ff" stroke="#0090ff" stroke-width="0.3"/><path d="M0 0 L-3.89 -3.89 A5.5 5.5 0 0 1 -1.42 -5.31 Z" fill="#00c0ff" stroke="#00c0ff" stroke-width="0.3"/><circle r="1.8" fill="#ffffff" opacity="0.35"/></g><path d="M183.6 500 V512.5" stroke="#777" stroke-width="1.3"/><path d="M178.5 506 H189.5" stroke="#a0a0a0" stroke-width="1.1"/><path d="M186.5 501 V511" stroke="#d0d0d0" stroke-width="0.9"/><path d="M179 502.8 L189.3 510.8" stroke="#e85050" stroke-width="1.4"/><path d="M181.5 505.5 L185 508" stroke="#5050b0" stroke-width="1.4"/><path d="M195.3 502 H202.6 L202.8 504.3 M195.3 502 L199.3 506.6 L195.3 511.2 H203 L203.2 508.8" stroke="#1a1a1a" stroke-width="1.7" fill="none" stroke-linejoin="miter"/><path d="M208.9 511.3 L213.9 505.9 L218.3 510.9" stroke="#7080c8" stroke-width="1.5" fill="none"/><path d="M219.8 502.4 V509.4 M215 505.3 H219.8" stroke="#8a8a8a" stroke-width="1.1" fill="none"/><g fill="none"><path d="M233.7 501.5 V511 M236.2 501.5 V511 M238.7 501.5 V511 M232.2 503.5 H242.2 M232.2 506 H242.2 M232.2 508.5 H242.2" stroke="#dcdcea" stroke-width="0.9"/><path d="M231.79999999999998 501 V511.2 H242.5" stroke="#8088c8" stroke-width="1.2"/></g><g fill="none"><path d="M249.0 501.5 V511 M251.5 501.5 V511 M254.0 501.5 V511 M247.5 503.5 H257.5 M247.5 506 H257.5 M247.5 508.5 H257.5" stroke="#dcdcea" stroke-width="0.9"/><path d="M247.1 501 V511.2 H257.8" stroke="#8088c8" stroke-width="1.2"/></g><rect x="252.2" y="500.6" width="5.6" height="5.4" fill="#eeeef4" stroke="#9a9aa8" stroke-width="0.9"/><rect x="253.2" y="501.8" width="2" height="1.8" fill="#e04848"/><rect x="253.2" y="503.6" width="2" height="1.6" fill="#4848e0"/><rect x="263.1" y="500.8" width="8.6" height="11.4" fill="#dcdcdc" stroke="#c4c4c4" stroke-width="0.7"/><rect x="263.3" y="501.4" width="8.2" height="2.6" fill="#e86060"/><rect x="263.3" y="508.9" width="8.2" height="2.5" fill="#e86060"/><ellipse cx="282.3" cy="505.6" rx="5.9" ry="4.3" fill="#a8a8a8"/><path d="M279 508.5 L278.5 512 L283 509.5 Z" fill="#a8a8a8"/><circle cx="297.7" cy="506.3" r="5.8" fill="#d8d8d8" stroke="#c6c6c6" stroke-width="0.8"/><circle cx="297.7" cy="506.3" r="3.2" fill="#ececec"/><g transform="translate(320,506.4)"><circle r="6.1" fill="#36368a"/><circle r="5.1" fill="#5050aa"/><ellipse cx="0" cy="-2.3" rx="3.9" ry="2.4" fill="#8a8ad0" opacity="0.7"/><rect x="-3" y="-2.2" width="4.8" height="3.6" fill="none" stroke="#d0d0f0" stroke-width="0.9"/><path d="M1 0 L3.5 -2" stroke="#d0d0f0" stroke-width="0.9"/></g><rect x="329" y="506" width="2" height="1.8" fill="#222"/><g transform="translate(340.4,506.4)"><circle r="6.1" fill="#36368a"/><circle r="5.1" fill="#5050aa"/><ellipse cx="0" cy="-2.3" rx="3.9" ry="2.4" fill="#8a8ad0" opacity="0.7"/><path d="M-2.6 -2.8 V2.8" stroke="#f0f0ff" stroke-width="1.2"/><path d="M2.8 -3 L-1.6 0 L2.8 3 Z" fill="#f0f0ff"/></g><g transform="translate(355.5,506.4)"><circle r="6.1" fill="#36368a"/><circle r="5.1" fill="#5050aa"/><ellipse cx="0" cy="-2.3" rx="3.9" ry="2.4" fill="#8a8ad0" opacity="0.7"/><path d="M0 -2.8 L-3.2 0 L0 2.8 Z M3.2 -2.8 L0 0 L3.2 2.8 Z" fill="#f0f0ff"/></g><g transform="translate(370.6,506.4)"><circle r="6.1" fill="#36368a"/><circle r="5.1" fill="#5050aa"/><ellipse cx="0" cy="-2.3" rx="3.9" ry="2.4" fill="#8a8ad0" opacity="0.7"/><path d="M-1.8 -3.1 L3 0 L-1.8 3.1 Z" fill="#f0f0ff"/></g><g transform="translate(385.8,506.4)"><circle r="6.1" fill="#36368a"/><circle r="5.1" fill="#5050aa"/><ellipse cx="0" cy="-2.3" rx="3.9" ry="2.4" fill="#8a8ad0" opacity="0.7"/><path d="M0 -2.8 L3.2 0 L0 2.8 Z M-3.2 -2.8 L0 0 L-3.2 2.8 Z" fill="#f0f0ff"/></g><g transform="translate(400.6,506.4)"><circle r="6.1" fill="#36368a"/><circle r="5.1" fill="#5050aa"/><ellipse cx="0" cy="-2.3" rx="3.9" ry="2.4" fill="#8a8ad0" opacity="0.7"/><path d="M2.6 -2.8 V2.8" stroke="#f0f0ff" stroke-width="1.2"/><path d="M-2.8 -3 L1.6 0 L-2.8 3 Z" fill="#f0f0ff"/></g><rect x="408.5" y="501.8" width="92.5" height="4.6" fill="#c6c6c6"/><rect x="409.3" y="502.4" width="17" height="3.4" fill="#d8d8d8"/><rect x="410" y="503" width="4.5" height="1.8" fill="#fafafa"/><rect x="415.3" y="503" width="5" height="1.8" fill="#fafafa"/><rect x="408.5" y="508.7" width="92.5" height="2.9" fill="#c8c8c8"/><rect x="491" y="509.6" width="9.5" height="1.6" fill="#a0a0a0"/><g transform="translate(509.6,506.4)"><circle r="6.1" fill="#36368a"/><circle r="5.1" fill="#5050aa"/><ellipse cx="0" cy="-2.3" rx="3.9" ry="2.4" fill="#8a8ad0" opacity="0.7"/><circle r="2.5" fill="none" stroke="#f0f0ff" stroke-width="1.4"/></g>
</svg>
</body></html>
